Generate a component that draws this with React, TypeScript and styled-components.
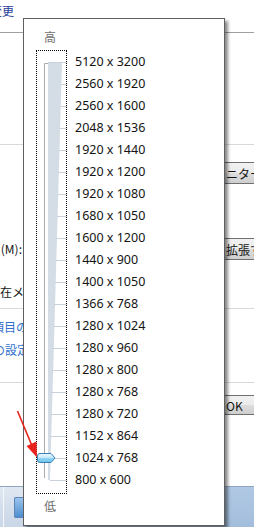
import styled, { createGlobalStyle } from "styled-components";

const GlobalStyle = createGlobalStyle`
  html, body {
    margin: 0;
    padding: 0;
    background: #ffffff;
  }
  body {
    width: 254px;
    height: 527px;
    overflow: hidden;
    font-family: "Noto Sans", "Noto Sans CJK JP", sans-serif;
  }
`;

const resolutions = [
  "5120 x 3200",
  "2560 x 1920",
  "2560 x 1600",
  "2048 x 1536",
  "1920 x 1440",
  "1920 x 1200",
  "1920 x 1080",
  "1680 x 1050",
  "1600 x 1200",
  "1440 x 900",
  "1400 x 1050",
  "1366 x 768",
  "1280 x 1024",
  "1280 x 960",
  "1280 x 800",
  "1280 x 768",
  "1280 x 720",
  "1152 x 864",
  "1024 x 768",
  "800 x 600",
];

const Screen = styled.div`
  position: relative;
  width: 254px;
  height: 527px;
  overflow: hidden;
  background: #ffffff;
  display: flex;
  flex-direction: column;
`;

// background dialog (mostly hidden behind the popup)
const Row = styled.div<{ $h: number }>`
  height: ${(p) => p.$h}px;
  flex-shrink: 0;
  display: flex;
  justify-content: space-between;
`;

const Rule = styled.div<{ $dark?: boolean }>`
  height: 1px;
  flex-shrink: 0;
  background: ${(p) => (p.$dark ? "#a0a0a0" : "#d9d9d9")};
`;

const LeftCell = styled.div<{ $end?: boolean }>`
  width: 23px;
  overflow: hidden;
  white-space: nowrap;
  display: flex;
  align-items: center;
  justify-content: ${(p) => (p.$end ? "flex-end" : "flex-start")};
`;

const RightCell = styled.div`
  width: 30px;
  overflow: hidden;
  white-space: nowrap;
  display: flex;
`;

const tones = {
  text: "#151515",
  link: "#3170cc",
  title: "#1f3d98",
};

const Label = styled.span<{ $tone?: keyof typeof tones; $shift?: number; $pad?: number }>`
  flex-shrink: 0;
  font-family: "Noto Sans CJK JP", sans-serif;
  font-size: 12px;
  line-height: 16px;
  color: ${(p) => tones[p.$tone ?? "text"]};
  margin-left: ${(p) => p.$shift ?? 0}px;
  padding-right: ${(p) => p.$pad ?? 0}px;
`;

const WinButton = styled.div`
  flex-shrink: 0;
  width: 70px;
  height: 100%;
  box-sizing: border-box;
  margin-left: -10px;
  padding-left: 11px;
  border: 1px solid #707070;
  border-radius: 3px;
  background: linear-gradient(#f2f2f2, #ebebeb 48%, #dddddd 52%, #cfcfcf);
  display: flex;
  align-items: center;
  font-family: "Noto Sans CJK JP", sans-serif;
  font-size: 12px;
  color: #151515;
`;

const Taskbar = styled.div`
  flex: 1;
  display: flex;
  border-top: 1px solid #8fa6c2;
`;

const TaskLeft = styled.div`
  width: 23px;
  background: linear-gradient(#dfe7f1, #c9d6e6);
  display: flex;
  align-items: center;
`;

const TaskEdge = styled.div`
  width: 1px;
  height: 100%;
  margin-left: 3px;
  background: #f4f8fc;
`;

const TaskButton = styled.div`
  width: 9px;
  height: 19px;
  margin-left: 10px;
  border: 1px solid #5a86b8;
  border-right: none;
  border-radius: 2px 0 0 2px;
  background: linear-gradient(#9cc4ec, #4d8dd0);
`;

const TaskRight = styled.div`
  flex: 1;
  background: linear-gradient(#b0c8e3, #a3bedd);
`;

// popup slider
const Popup = styled.div`
  position: absolute;
  left: 23px;
  top: 18px;
  width: 202px;
  height: 508px;
  box-sizing: border-box;
  border: 1px solid #5f5f5f;
  background: #ffffff;
  box-shadow: 3px 3px 3px rgba(0, 0, 0, 0.45);
  display: flex;
  flex-direction: column;
`;

const Cap = styled.div<{ $h: number; $top: number }>`
  height: ${(p) => p.$h}px;
  box-sizing: border-box;
  padding: ${(p) => p.$top}px 0 0 20px;
  font-family: "Noto Sans CJK JP", sans-serif;
  font-size: 12px;
  line-height: 16px;
  color: #6f6f6f;
`;

const Body = styled.div`
  display: flex;
  height: 444px;
`;

const Track = styled.div`
  margin-left: 12px;
  width: 31px;
  height: 444px;
  box-sizing: border-box;
  border: 1px dotted #000000;
  flex-shrink: 0;
`;

const TrackArt = styled.svg`
  display: block;
  overflow: visible;
`;

const List = styled.div`
  margin-left: 8px;
  padding-top: 1px;
  display: flex;
  flex-direction: column;
`;

const Item = styled.div`
  height: 22px;
  line-height: 22px;
  font-family: "Noto Sans", sans-serif;
  font-size: 12.5px;
  color: #141414;
  white-space: nowrap;
`;

const Annotation = styled.svg`
  position: absolute;
  left: 0;
  top: 0;
  pointer-events: none;
`;

function SliderArt() {
  // local coordinates: origin at the inner corner of the dotted box
  const top = 12;
  const bottom = 429;
  const ticks = resolutions.map((_, i) => 11.5 + i * 22);
  const edgeAt = (y: number) =>
    Math.max(13, 25 - (14 * (y - top)) / (bottom - top));
  return (
    <TrackArt width="29" height="442" viewBox="0 0 29 442">
      <defs>
        <linearGradient id="thumb" x1="0" y1="0" x2="0" y2="1">
          <stop offset="0" stopColor="#eef9fe" />
          <stop offset="0.45" stopColor="#c4e9fa" />
          <stop offset="0.55" stopColor="#8fd3f1" />
          <stop offset="1" stopColor="#6cc3ea" />
        </linearGradient>
      </defs>
      <polygon points={`11,${top} 25,${top} 13,${bottom} 11,${bottom}`} fill="#d4dde6" />
      {ticks.map((y) => (
        <line
          key={y}
          x1={y < top ? 11 : edgeAt(y)}
          y1={y}
          x2="30"
          y2={y}
          stroke="#c9d2db"
          strokeWidth="1"
        />
      ))}
      <path d={`M11 ${top + 0.5} H7.5 V427`} fill="none" stroke="#ababab" strokeWidth="1" />
      <path
        d="M3 402.5 H14 L18 407 L14 411.5 H3 Q0.5 411.5 0.5 409 V405 Q0.5 402.5 3 402.5 Z"
        fill="url(#thumb)"
        stroke="#3a80b6"
        strokeWidth="1"
      />
    </TrackArt>
  );
}

export default function App() {
  return (
    <>
      <GlobalStyle />
      <Screen>
        <Row $h={22}>
          <LeftCell>
            <Label $tone="title" $shift={-10}>変更</Label>
          </LeftCell>
        </Row>
        <Row $h={10} />
        <Rule $dark />
        <Row $h={111} />
        <Rule />
        <Row $h={17} />
        <Row $h={22}>
          <LeftCell />
          <RightCell>
            <WinButton>ニター</WinButton>
          </RightCell>
        </Row>
        <Row $h={54} />
        <Row $h={22}>
          <LeftCell $end>
            <Label $pad={1}>モード(M):</Label>
          </LeftCell>
          <RightCell>
            <WinButton>拡張す</WinButton>
          </RightCell>
        </Row>
        <Row $h={21} />
        <Row $h={22}>
          <LeftCell>
            <Label>在メイン</Label>
          </LeftCell>
        </Row>
        <Row $h={5} />
        <Rule />
        <Row $h={7} />
        <Row $h={22}>
          <LeftCell>
            <Label $tone="link" $shift={-8}>項目の</Label>
          </LeftCell>
        </Row>
        <Row $h={1} />
        <Row $h={22}>
          <LeftCell>
            <Label $tone="link" $shift={-7}>の設定</Label>
          </LeftCell>
        </Row>
        <Row $h={21} />
        <Rule />
        <Row $h={12} />
        <Row $h={20}>
          <LeftCell />
          <RightCell>
            <WinButton>OK</WinButton>
          </RightCell>
        </Row>
        <Row $h={71} />
        <Taskbar>
          <TaskLeft>
            <TaskEdge />
            <TaskButton />
          </TaskLeft>
          <TaskRight />
        </Taskbar>

        <Popup>
          <Cap $h={31} $top={10}>高</Cap>
          <Body>
            <Track>
              <SliderArt />
            </Track>
            <List>
              {resolutions.map((r) => (
                <Item key={r}>{r}</Item>
              ))}
            </List>
          </Body>
          <Cap $h={31} $top={4}>低</Cap>
        </Popup>

        <Annotation width="254" height="527" viewBox="0 0 254 527">
          <line x1="17.5" y1="411" x2="32.5" y2="447" stroke="#e8231d" strokeWidth="1.6" />
          <polygon points="37,457.5 26.5,446 36.5,441.5" fill="#e8231d" />
        </Annotation>
      </Screen>
    </>
  );
}
